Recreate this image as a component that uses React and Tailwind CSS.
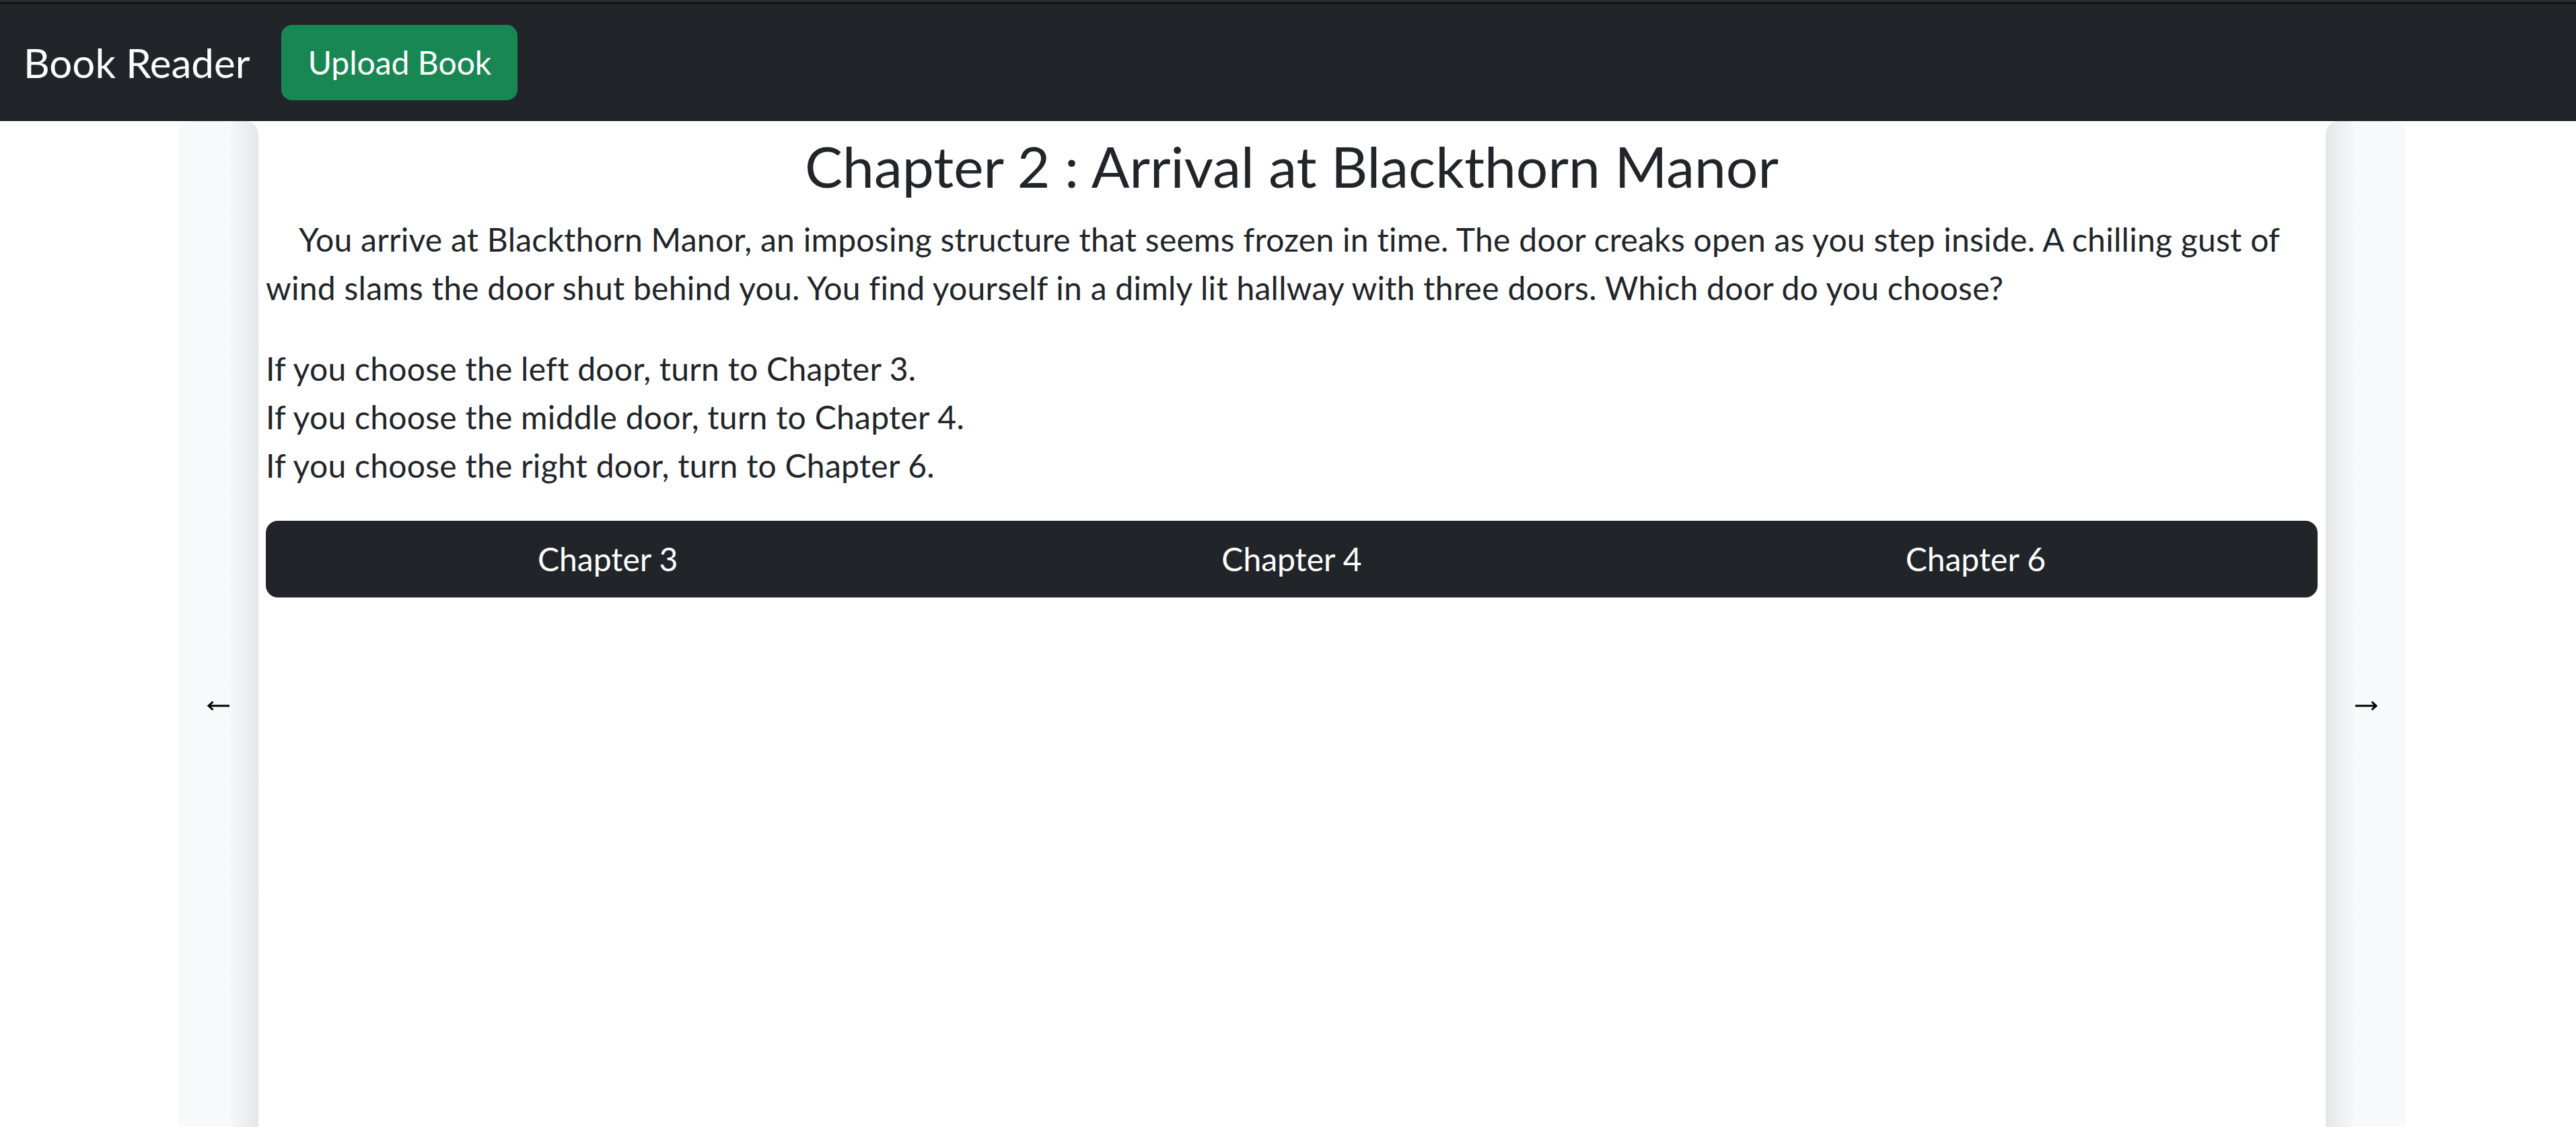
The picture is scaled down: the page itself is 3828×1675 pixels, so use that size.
import React from 'react';

const choices = ['Chapter 3', 'Chapter 4', 'Chapter 6'];

const Arrow = ({ dir }) => (
  <svg width="34" height="16" viewBox="0 0 34 16" fill="none" stroke="#000" strokeWidth="3" aria-label={dir === 'left' ? '←' : '→'}>
    {dir === 'left' ? (
      <>
        <path d="M2 8H33" />
        <path d="M8.5 2L2 8l6.5 6" strokeLinejoin="miter" />
      </>
    ) : (
      <>
        <path d="M1 8H32" />
        <path d="M25.5 2L32 8l-6.5 6" strokeLinejoin="miter" />
      </>
    )}
  </svg>
);

const App = () => {
  return (
    <div className="min-h-screen bg-white font-['Lato','Noto_Sans',sans-serif] text-[#212529]">
      {/* top strip */}
      <div className="h-[3px] bg-[#2d2c31]"></div>
      <div className="h-[3px] bg-[#111214]"></div>

      {/* navbar */}
      <nav className="h-[174px] bg-[#212529] flex items-center pl-[35px]">
        <span className="text-[60px] leading-none text-white mr-[47px]">Book Reader</span>
        <button className="h-[112px] w-[351px] rounded-[16px] bg-[#198754] text-white text-[48px] leading-none">
          Upload Book
        </button>
      </nav>

      {/* reader */}
      <main className="flex ml-[265px] w-[3310px]">
        <button className="w-[119px] h-[1738px] shrink-0 rounded-t-[20px] bg-[linear-gradient(to_right,#f8f9fa_62%,#e5e6e8)] flex items-center justify-center">
          <Arrow dir="left" />
        </button>

        <div className="flex-1 bg-white pl-[11px] pr-[12px] pt-[17px]">
          <h3 className="text-[84px] leading-[1.2] text-center mb-[22px]">
            Chapter 2 : Arrival at Blackthorn Manor
          </h3>
          <p className="text-[48px] leading-[1.5] tracking-[0.27px] indent-[49px] mb-[48px]">
            You arrive at Blackthorn Manor, an imposing structure that seems frozen in time. The door creaks open as you step inside. A chilling gust of wind slams the door shut behind you. You find yourself in a dimly lit hallway with three doors. Which door do you choose?
          </p>
          <p className="text-[48px] leading-[1.5] tracking-[0.27px] mb-[46px]">
            If you choose the left door, turn to Chapter 3.
            <br />
            If you choose the middle door, turn to Chapter 4.
            <br />
            If you choose the right door, turn to Chapter 6.
          </p>
          <div className="flex h-[114px] rounded-[18px] overflow-hidden bg-[#212529]">
            {choices.map(label => (
              <button key={label} className="flex-1 text-white text-[48px] leading-none">
                {label}
              </button>
            ))}
          </div>
        </div>

        <button className="w-[119px] h-[1738px] shrink-0 rounded-t-[20px] bg-[linear-gradient(to_left,#f8f9fa_62%,#e5e6e8)] flex items-center justify-center">
          <Arrow dir="right" />
        </button>
      </main>
    </div>
  );
};

export default App;
